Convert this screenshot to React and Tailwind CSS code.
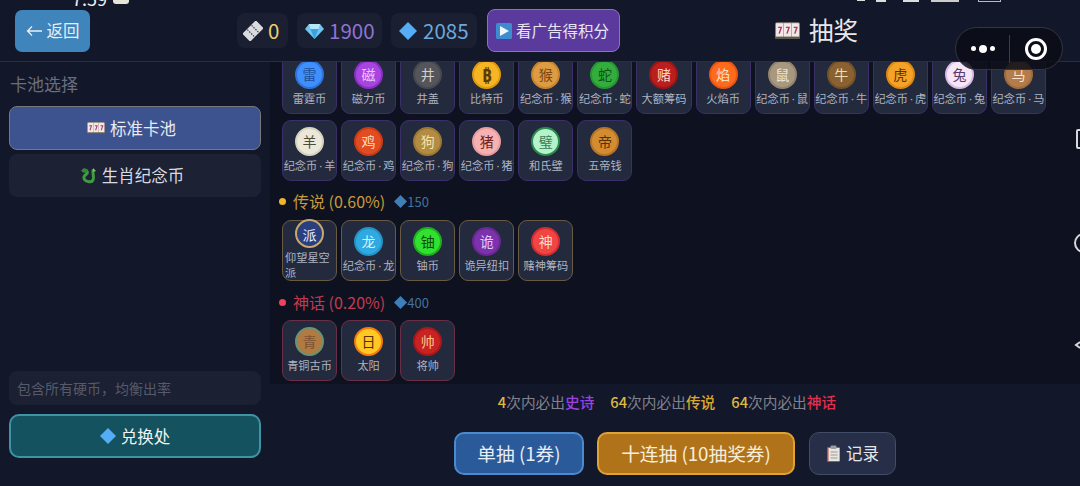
import React from "react";

const FONT = '"Noto Sans CJK SC", "Noto Sans", sans-serif';

const Slots = ({ w = 16, h = 12 }) => (
  <svg width={w} height={h} viewBox="0 0 24 18" className="shrink-0">
    <rect x="0" y="1" width="24" height="16" rx="2" fill="#8a7f7a" />
    <rect x="1" y="2" width="7" height="13" fill="#f1e9e6" />
    <rect x="8.5" y="2" width="7" height="13" fill="#f1e9e6" />
    <rect x="16" y="2" width="7" height="13" fill="#f1e9e6" />
    <path d="M3 6h3l-2 6M10.5 6h3l-2 6M18 6h3l-2 6" stroke="#b03a6a" strokeWidth="1.4" fill="none" />
    <rect x="0" y="15" width="24" height="2" fill="#5c5a4a" />
  </svg>
);

const Ticket = () => (
  <svg width="20" height="20" viewBox="0 0 20 20" className="shrink-0">
    <g transform="rotate(-45 10 10)">
      <rect x="0.500" y="4.500" width="19" height="11" rx="1" fill="#d9dbdf" />
      <path d="M7 5v10M13 5v10" stroke="#3b3f4a" strokeWidth="1.200" strokeDasharray="1.500 1.200" />
    </g>
  </svg>
);

const Gem = () => (
  <svg width="19" height="16" viewBox="0 0 19 16" className="shrink-0">
    <path d="M4 1h11l4 5-9.500 10L0 6z" fill="#6fc6f2" />
    <path d="M5.500 6h8L9.500 16z" fill="#3aa0e0" />
    <path d="M4 1l1.500 5h8L15 1z" fill="#b5e6fb" />
  </svg>
);

const Diamond = ({ size = 18, color = "#55aef5" }) => (
  <svg width={size} height={size} viewBox="0 0 18 18" className="shrink-0">
    <path d="M9 0l9 9-9 9-9-9z" fill={color} />
  </svg>
);

const PlayBox = () => (
  <svg width="16" height="16" viewBox="0 0 16 16" className="shrink-0">
    <rect width="16" height="16" rx="1.500" fill="#3c8ccf" />
    <path d="M4 3l9 5-9 5z" fill="#f2f6fa" />
  </svg>
);

const Dragon = () => (
  <svg width="17" height="17" viewBox="0 0 17 17" className="shrink-0">
    <path d="M5 4c3 0 3 2 1 3.500S3 10 4.500 12.500s7 3.500 8.500 0.500-0.500-5 0-9.500" stroke="#3f9c42" strokeWidth="3" fill="none" strokeLinecap="round" />
    <path d="M1 3.500l3-2.500 4 1.500-1 3H3z" fill="#2f8a3a" />
    <path d="M13 1l3 3-3 1z" fill="#7cc850" />
  </svg>
);

const Clipboard = () => (
  <svg width="15" height="17" viewBox="0 0 15 17" className="shrink-0">
    <rect x="1" y="2" width="13" height="15" rx="1" fill="#c9473f" />
    <rect x="2.500" y="3" width="11" height="13" fill="#e9e6df" />
    <rect x="4.500" y="0.500" width="6" height="3.500" rx="1" fill="#9b9da3" />
    <path d="M4.500 7h7M4.500 10h7M4.500 13h7" stroke="#9a9a9a" strokeWidth="1" />
  </svg>
);

const epic = [
  ["雷", "雷霆币", "bg-[#3f8fff]", "text-[#1c4f9e]", "border-[#2e74d8]"],
  ["磁", "磁力币", "bg-[#a845e0]", "text-[#e9c9ff]", "border-[#8a2fc4]"],
  ["井", "井盖", "bg-[#55565c]", "text-[#d0d0d0]", "border-[#48494f]"],
  ["₿", "比特币", "bg-[#f7b524]", "text-[#5c3c04]", "border-[#e09a12]"],
  ["猴", "纪念币·猴", "bg-[#dd9b42]", "text-[#7a4a12]", "border-[#c8842c]"],
  ["蛇", "纪念币·蛇", "bg-[#33ad3e]", "text-[#0c5418]", "border-[#279632]"],
  ["赌", "大额筹码", "bg-[#bb1e1e]", "text-[#ffd9c8]", "border-[#9c1616]"],
  ["焰", "火焰币", "bg-[#ff6a1c]", "text-[#ffe2c4]", "border-[#ec5510]"],
  ["鼠", "纪念币·鼠", "bg-[#a89880]", "text-[#eee6d6]", "border-[#93846e]"],
  ["牛", "纪念币·牛", "bg-[#8a6232]", "text-[#f2dcae]", "border-[#755226]"],
  ["虎", "纪念币·虎", "bg-[#f6a226]", "text-[#5a3200]", "border-[#dd8a14]"],
  ["兔", "纪念币·兔", "bg-[#f6e6f6]", "text-[#5a3a70]", "border-[#d9bce8]"],
  ["马", "纪念币·马", "bg-[#b27c4c]", "text-[#fbe4c6]", "border-[#a06c3e]"],
  ["羊", "纪念币·羊", "bg-[#ece8d9]", "text-[#4c4a38]", "border-[#d6d2c0]"],
  ["鸡", "纪念币·鸡", "bg-[#e24c22]", "text-[#ffdcbc]", "border-[#c83c16]"],
  ["狗", "纪念币·狗", "bg-[#b28c42]", "text-[#f6e2aa]", "border-[#9c7834]"],
  ["猪", "纪念币·猪", "bg-[#f6b2b2]", "text-[#6c2222]", "border-[#e89c9c]"],
  ["璧", "和氏璧", "bg-[#b4f2cc]", "text-[#3c7c52]", "border-[#2c8a4e]"],
  ["帝", "五帝钱", "bg-[#d28c32]", "text-[#5a3200]", "border-[#b87424]"],
];

const legendary = [
  ["派", "仰望星空派", "bg-[#2a3f80]", "text-[#e8ecf6]", "border-[#c8a86c]"],
  ["龙", "纪念币·龙", "bg-[#30a9e0]", "text-[#d4f2ff]", "border-[#2592c6]"],
  ["铀", "铀币", "bg-[#32e032]", "text-[#0a480a]", "border-[#1fae1f]"],
  ["诡", "诡异纽扣", "bg-[#7c32aa]", "text-[#e6c8ff]", "border-[#6a2794]"],
  ["神", "赌神筹码", "bg-[#f24444]", "text-[#ffdcc4]", "border-[#cf2f2f]"],
];

const mythic = [
  ["青", "青铜古币", "bg-[#b07a42]", "text-[#7a5230]", "border-[#6b9272]"],
  ["日", "太阳", "bg-[#ffc822]", "text-[#5a2c00]", "border-[#f47a12]"],
  ["帅", "将帅", "bg-[#c82222]", "text-[#ffc284]", "border-[#a81818]"],
];

const Label = ({ name }) => {
  if (name.includes("·")) {
    const [a, b] = name.split("·");
    return (
      <span className="block whitespace-nowrap -mx-[3px]">
        {a}
        <span className="font-['Noto_Sans'] mx-[2px]">·</span>
        {b}
      </span>
    );
  }
  return name;
};

const Tile = ({ coin, border }) => {
  const [ch, name, bg, fg, ring] = coin;
  const glyph = ch === "₿" ? "text-[17px] font-bold" : "text-[14px]";
  return (
    <div className={`h-[61px] rounded-[9px] border ${border} bg-[#232a3e] flex flex-col items-center justify-center px-[2px] pb-[2px] min-w-0`}>
      <div className={`w-[29px] h-[29px] shrink-0 rounded-full border-2 ${bg} ${fg} ${ring} ${glyph} flex items-center justify-center leading-none`}>
        {ch}
      </div>
      <div className="mt-[2px] text-[11.2px] leading-[15px] text-[#aeb4c2] max-w-[49px]">
        <Label name={name} />
      </div>
    </div>
  );
};

const Grid = ({ coins, border }) => (
  <div className="w-[764px] ml-[12px] grid grid-cols-[repeat(13,minmax(0,1fr))] gap-x-[4px] gap-y-[6px]">
    {coins.map((c) => (
      <Tile key={c[1]} coin={c} border={border} />
    ))}
  </div>
);

const Heading = ({ dot, color, label, cost }) => (
  <div className="h-[18px] ml-[9px] flex items-center text-[16px] leading-none">
    <span className={`w-[7px] h-[7px] rounded-full ${dot} mr-[7px]`} />
    <span className={color}>{label}</span>
    <span className="ml-[9px] flex items-center text-[13px] text-[#44719f]">
      <Diamond size={13} color="#3f7fb8" />
      <span>{cost}</span>
    </span>
  </div>
);

const Stat = ({ icon, value, color, className }) => (
  <div className={`h-[35px] rounded-[8px] bg-[#1a1f31] flex items-center ${className}`}>
    {icon}
    <span className={`text-[20.500px] leading-none ${color}`}>{value}</span>
  </div>
);

export default function App() {
  return (
    <div className="relative w-[1080px] h-[486px] overflow-hidden flex flex-col bg-[#13172a] text-white" style={{ fontFamily: FONT }}>
      <header className="h-[62px] shrink-0 border-b border-[#2a2d3a] flex items-center pl-[15px] bg-[#13172a]">
        <button className="w-[75px] h-[42px] rounded-[7px] bg-[#3f84bb] text-[#e6eff6] text-[16.500px] flex items-center justify-center gap-[5px]">
          <svg width="16" height="12" viewBox="0 0 16 12"><path d="M16 6H1.500M6 1.500L1.500 6 6 10.500" stroke="#e6eff6" strokeWidth="1.300" fill="none" /></svg>
          返回
        </button>
        <div className="ml-[147px] flex items-center gap-[9px]">
          <Stat icon={<Ticket />} value="0" color="text-[#e8d36a]" className="w-[51px] pl-[6px] gap-[5px]" />
          <Stat icon={<Gem />} value="1900" color="text-[#9272d2]" className="w-[85px] pl-[8px] gap-[5px]" />
          <Stat icon={<Diamond />} value="2085" color="text-[#6aa9dc]" className="w-[86px] pl-[8px] gap-[6px]" />
        </div>
        <button className="ml-[10px] w-[133px] h-[43px] rounded-[8px] bg-[#5a3a9c] border border-[#8e6fd0] text-[#e8e4f2] text-[15.500px] flex items-center justify-center gap-[4px] pr-[2px]">
          <PlayBox />
          看广告得积分
        </button>
        <div className="ml-[155px] flex items-center gap-[9px] text-[24.500px] leading-none text-[#e8e8ec] -mt-[1px]">
          <Slots w={25} h={19} />
          抽奖
        </div>
      </header>

      <div className="flex-1 min-h-0 flex">
        <aside className="w-[270px] shrink-0 px-[9px] pb-[28px] flex flex-col bg-[#13172a]">
          <div className="h-[44px] pl-[1px] flex items-center text-[17px] text-[#686e7e]">卡池选择</div>
          <button className="h-[44px] rounded-[8px] bg-[#3d5390] border border-[#77787e] text-[16.500px] text-[#e8eaf2] flex items-center justify-center gap-[5px] pr-[7px]">
            <Slots w={18} h={14} />
            标准卡池
          </button>
          <button className="mt-[4px] h-[43px] rounded-[8px] bg-[#1c2134] text-[16.500px] text-[#d8dae2] flex items-center justify-center gap-[5px] pr-[6px]">
            <Dragon />
            生肖纪念币
          </button>
          <div className="flex-1" />
          <div className="h-[34px] rounded-[8px] bg-[#1b2032] pl-[8px] flex items-center text-[14px] text-[#565b6b]">包含所有硬币，均衡出率</div>
          <button className="mt-[9px] h-[44px] w-[252px] rounded-[10px] bg-[#14525f] border-2 border-[#3f93a6] text-[16.500px] text-[#eef5f6] flex items-center justify-center gap-[5px]">
            <Diamond size={16} />
            兑换处
          </button>
        </aside>

        <main className="flex-1 min-w-0 flex flex-col">
          <div className="h-[322px] shrink-0 overflow-hidden bg-[#0e1220]">
            <div className="-mt-[9px]">
              <Grid coins={epic} border="border-[#3b2f68]" />
            </div>
            <div className="mt-[11px]">
              <Heading dot="bg-[#f0b429]" color="text-[#c89a3a]" label="传说 (0.60%)" cost="150" />
            </div>
            <div className="mt-[10px]">
              <Grid coins={legendary} border="border-[#6a5a44]" />
            </div>
            <div className="mt-[12px]">
              <Heading dot="bg-[#f0405a]" color="text-[#c23a50]" label="神话 (0.20%)" cost="400" />
            </div>
            <div className="mt-[9px]">
              <Grid coins={mythic} border="border-[#6a2f46]" />
            </div>
          </div>

          <div className="flex-1 flex flex-col items-center">
            <div className="mt-[8px] h-[20px] pr-[16px] flex items-center gap-[16px] text-[14.700px] leading-none text-[#80838f]">
              <span><span className="font-medium text-[#dcb840]">4</span>次内必出<span className="font-medium text-[#9c40e0]">史诗</span></span>
              <span><span className="font-medium text-[#dcb840]">64</span>次内必出<span className="font-medium text-[#dca830]">传说</span></span>
              <span><span className="font-medium text-[#dcb840]">64</span>次内必出<span className="font-medium text-[#e0304c]">神话</span></span>
            </div>
            <div className="mt-[20px] flex items-center">
              <button className="w-[130px] h-[43px] rounded-[10px] bg-[#2a5a9a] border-2 border-[#4a8ad0] text-[18.700px] text-[#e8eef6]">单抽 (1券)</button>
              <button className="ml-[13px] w-[198px] h-[43px] rounded-[10px] bg-[#b0731a] border-2 border-[#e0a232] text-[18.700px] text-[#f8eedc]">十连抽 (10抽奖券)</button>
              <button className="ml-[14px] w-[87px] h-[43px] rounded-[10px] bg-[#272f48] border border-[#414c66] text-[16.500px] text-[#e4e6ec] flex items-center justify-center gap-[5px]">
                <Clipboard />
                记录
              </button>
            </div>
          </div>
        </main>
      </div>

      {/* device status bar remnants */}
      <span className="absolute left-[72px] -top-[11px] text-[18px] leading-[18px] text-[#f0f0f0]">7:59</span>
      <span className="absolute left-[113px] top-0 w-[16px] h-[4px] rounded-b-[3px] bg-[#e8e4d8]" />
      <span className="absolute left-[857px] top-0 w-[8px] h-[1px] bg-[#dddddd]" />
      <span className="absolute left-[876px] top-0 w-[10px] h-[2px] bg-[#dddddd]" />
      <span className="absolute left-[903px] top-0 w-[16px] h-[2px] bg-[#dddddd]" />
      <span className="absolute left-[931px] top-0 w-[28px] h-[2px] bg-[#cccccc]" />
      <span className="absolute left-[978px] top-0 w-[23px] h-[2px] border-b border-x border-[#bbbbbb]" />

      {/* mini-program capsule */}
      <div className="absolute left-[955px] top-[27px] w-[108px] h-[43px] rounded-full bg-[#0b0d16]/85 border border-[#33363f] flex items-center">
        <div className="w-[53px] flex items-center justify-center gap-[3px]">
          <span className="w-[5px] h-[5px] rounded-full bg-white" />
          <span className="w-[8px] h-[8px] rounded-full bg-white" />
          <span className="w-[5px] h-[5px] rounded-full bg-white" />
        </div>
        <span className="w-px h-[28px] bg-[#3a3d46]" />
        <div className="flex-1 flex items-center justify-center">
          <span className="w-[22px] h-[22px] rounded-full border-[3px] border-white flex items-center justify-center">
            <span className="w-[10px] h-[10px] rounded-full bg-white" />
          </span>
        </div>
      </div>

      {/* clipped floating controls at the right edge */}
      <span className="absolute left-[1076px] top-[129px] w-[10px] h-[20px] rounded-[2px] border-2 border-[#d8d8dc]" />
      <span className="absolute left-[1074px] top-[233px] w-[20px] h-[20px] rounded-full border-2 border-[#d8d8dc]" />
      <svg className="absolute left-[1074px] top-[339px]" width="6" height="12" viewBox="0 0 6 12">
        <path d="M6 3L2 6l4 3" stroke="#d8d8dc" strokeWidth="2" fill="none" />
      </svg>
    </div>
  );
}
